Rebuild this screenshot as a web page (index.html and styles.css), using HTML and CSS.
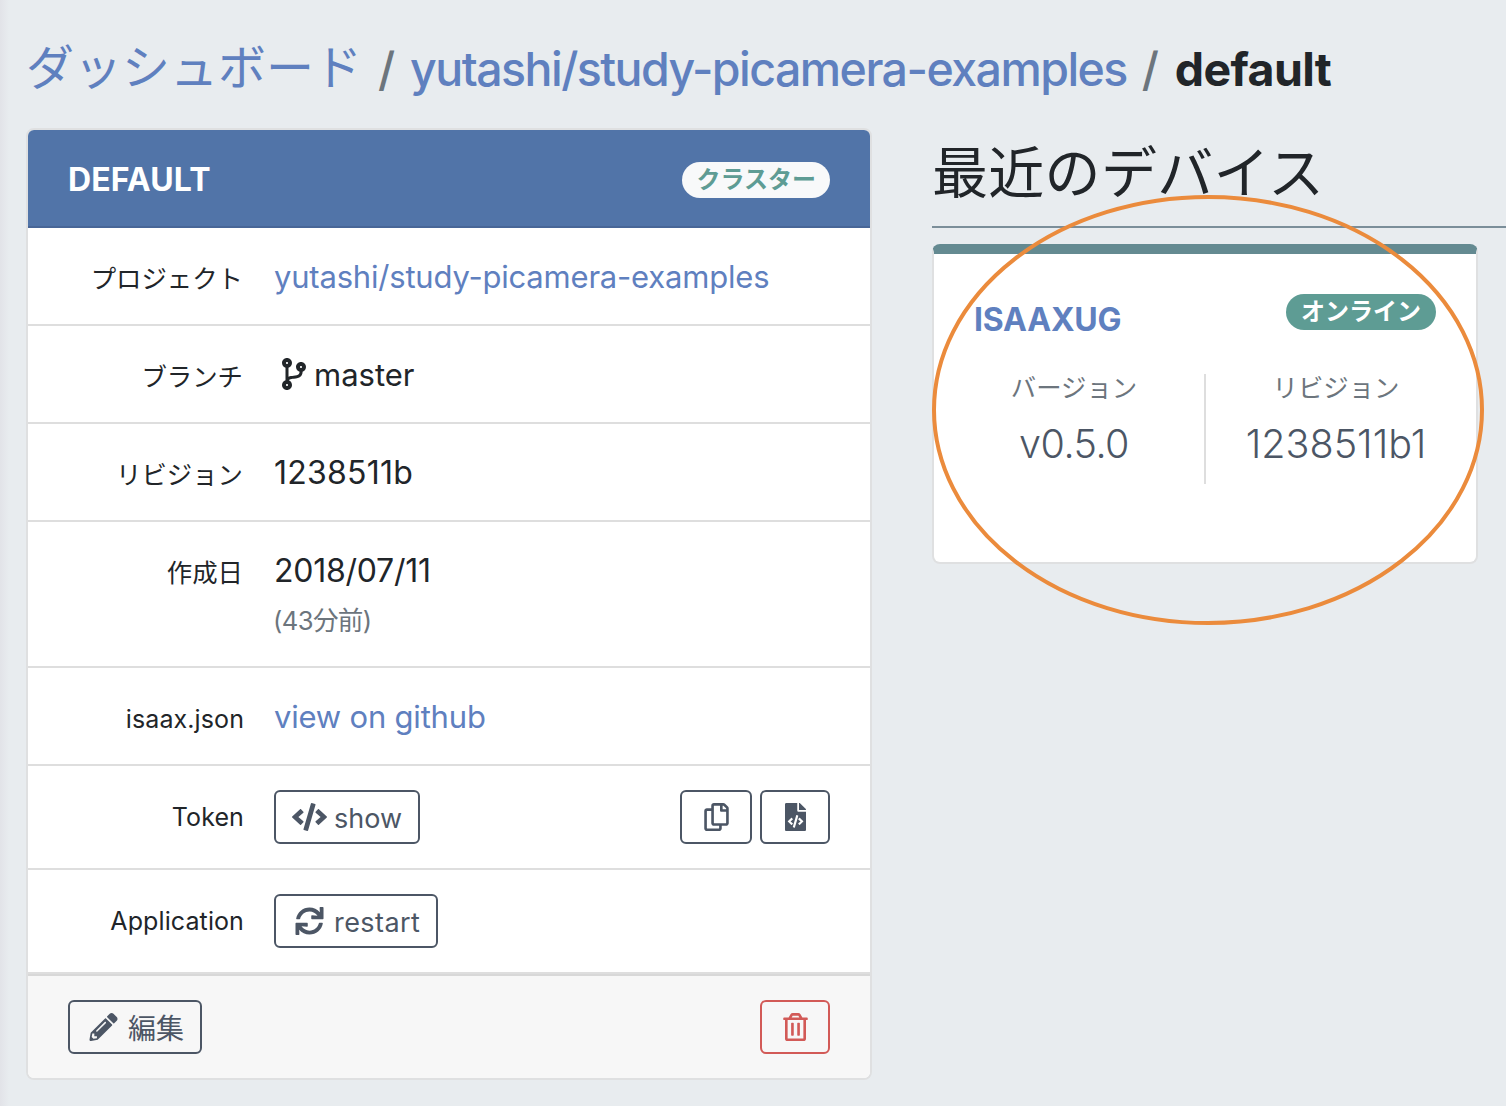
FILE: index.html
```html
<!DOCTYPE html>
<html lang="ja">
<head>
<meta charset="utf-8">
<title>default</title>
<link rel="stylesheet" href="styles.css">
</head>
<body>
<nav class="breadcrumb">
  <a class="crumb-home" href="#">ダッシュボード</a>
  <span class="slash">/</span>
  <a class="crumb-project" href="#">yutashi/study-picamera-examples</a>
  <span class="slash slash-last">/</span>
  <span class="crumb-current">default</span>
</nav>
<main class="columns">
  <section class="card">
    <header class="card-header">
      <h2 class="card-title">DEFAULT</h2>
      <span class="badge badge-light">クラスター</span>
    </header>
    <div class="row">
      <div class="label">プロジェクト</div>
      <div class="value"><a href="#">yutashi/study-picamera-examples</a></div>
    </div>
    <div class="row">
      <div class="label">ブランチ</div>
      <div class="value branch"><svg class="icon-branch" viewBox="0 0 384 512"><path d="M384 144c0-44.2-35.8-80-80-80s-80 35.8-80 80c0 36.4 24.3 67.1 57.5 76.8-.6 16.1-4.2 28.5-11 36.9-15.4 19.2-49.3 22.4-85.2 25.7-28.2 2.6-57.4 5.4-81.3 16.9v-144c32.5-10.2 56-40.5 56-76.3 0-44.2-35.8-80-80-80S0 35.8 0 80c0 35.8 23.5 66.1 56 76.3v199.3C23.5 365.9 0 396.2 0 432c0 44.2 35.8 80 80 80s80-35.8 80-80c0-34-21.2-63.1-51.2-74.6 3.1-5.2 7.8-9.8 14.9-13.4 16.2-8.2 40.4-10.4 66.1-12.8 42.2-3.9 90-8.4 118.2-43.4 14-17.4 21.1-39.8 21.6-67.9 31.6-10.8 54.4-40.7 54.4-75.9zM80 64c8.8 0 16 7.2 16 16s-7.2 16-16 16-16-7.2-16-16 7.2-16 16-16zm0 384c-8.8 0-16-7.2-16-16s7.2-16 16-16 16 7.2 16 16-7.2 16-16 16zm224-320c8.8 0 16 7.2 16 16s-7.2 16-16 16-16-7.2-16-16 7.2-16 16-16z"/></svg>master</div>
    </div>
    <div class="row">
      <div class="label">リビジョン</div>
      <div class="value numeric">1238511b</div>
    </div>
    <div class="row row-tall">
      <div class="label">作成日</div>
      <div class="value numeric date">2018/07/11<div class="ago">(43分前)</div></div>
    </div>
    <div class="row">
      <div class="label label-latin">isaax.json</div>
      <div class="value"><a href="#">view on github</a></div>
    </div>
    <div class="row row-actions">
      <div class="label label-latin">Token</div>
      <div class="value actions">
        <button class="btn"><svg class="icon" viewBox="0 0 640 512"><path d="M278.9 511.5l-61-17.7c-6.4-1.8-10-8.5-8.2-14.9L346.2 8.7c1.8-6.4 8.5-10 14.9-8.2l61 17.7c6.4 1.8 10 8.5 8.2 14.9L293.8 503.3c-1.9 6.4-8.5 10.1-14.9 8.2zm-114-112.2l43.5-46.4c4.6-4.9 4.3-12.7-.8-17.2L117 256l90.6-79.7c5.1-4.5 5.5-12.3.8-17.2l-43.5-46.4c-4.5-4.8-12.1-5.1-17-.5L3.8 247.2c-5.1 4.7-5.1 12.8 0 17.5l144.1 135.1c4.9 4.6 12.5 4.4 17-.5zm327.2.6l144.1-135.1c5.1-4.7 5.1-12.8 0-17.5L492.1 112.1c-4.8-4.5-12.4-4.3-17 .5L431.6 159c-4.6 4.9-4.3 12.7.8 17.2L523 256l-90.6 79.7c-5.1 4.5-5.5 12.3-.8 17.2l43.5 46.4c4.5 4.9 12.1 5.1 17 .6z"/></svg><span class="btn-text">show</span></button>
        <div class="tools">
          <button class="btn btn-copy"><svg class="icon" viewBox="0 0 448 512"><path d="M433.941 65.941l-51.882-51.882A48 48 0 0 0 348.118 0H176c-26.51 0-48 21.49-48 48v48H48c-26.51 0-48 21.49-48 48v320c0 26.51 21.49 48 48 48h224c26.51 0 48-21.49 48-48v-48h80c26.51 0 48-21.49 48-48V99.882a48 48 0 0 0-14.059-33.941zM266 464H54a6 6 0 0 1-6-6V150a6 6 0 0 1 6-6h74v224c0 26.51 21.49 48 48 48h96v42a6 6 0 0 1-6 6zm128-96H182a6 6 0 0 1-6-6V54a6 6 0 0 1 6-6h106v88c0 13.255 10.745 24 24 24h88v202a6 6 0 0 1-6 6zm6-256h-64V48h9.632c1.591 0 3.117.632 4.243 1.757l48.368 48.368a6 6 0 0 1 1.757 4.243V112z"/></svg></button>
          <button class="btn btn-square"><svg class="icon" viewBox="0 0 384 512"><path d="M384 121.941V128H256V0h6.059c6.365 0 12.47 2.529 16.971 7.029l97.941 97.941A24.005 24.005 0 0 1 384 121.941zM248 160c-13.2 0-24-10.8-24-24V0H24C10.745 0 0 10.745 0 24v464c0 13.255 10.745 24 24 24h336c13.255 0 24-10.745 24-24V160H248zM123.206 400.505a5.4 5.4 0 0 1-7.633.246l-64.866-60.812a5.4 5.4 0 0 1 0-7.879l64.866-60.812a5.4 5.4 0 0 1 7.633.246l19.579 20.885a5.4 5.4 0 0 1-.372 7.747L101.65 336l40.763 35.874a5.4 5.4 0 0 1 .372 7.747l-19.579 20.884zm51.295 50.479l-27.453-7.97a5.402 5.402 0 0 1-3.681-6.692l61.44-211.626a5.402 5.402 0 0 1 6.692-3.681l27.452 7.97a5.4 5.4 0 0 1 3.68 6.692l-61.44 211.626a5.397 5.397 0 0 1-6.69 3.681zm160.792-111.045l-64.866 60.812a5.4 5.4 0 0 1-7.633-.246l-19.58-20.885a5.4 5.4 0 0 1 .372-7.747L284.35 336l-40.763-35.874a5.4 5.4 0 0 1-.372-7.747l19.58-20.885a5.4 5.4 0 0 1 7.633-.246l64.866 60.812a5.4 5.4 0 0 1-.001 7.879z"/></svg></button>
        </div>
      </div>
    </div>
    <div class="row row-actions">
      <div class="label label-latin">Application</div>
      <div class="value actions">
        <button class="btn btn-restart"><svg class="icon" viewBox="0 0 512 512"><path d="M440.935 12.574l3.966 82.766C399.416 41.904 331.674 8 256 8 134.813 8 33.933 94.924 12.296 209.824 10.908 217.193 16.604 224 24.103 224h49.084c5.57 0 10.377-3.842 11.676-9.259C103.407 137.408 172.931 80 256 80c60.893 0 114.512 30.856 146.104 77.801l-101.53-4.865c-6.845-.328-12.574 5.133-12.574 11.986v47.411c0 6.627 5.373 12 12 12h200.333c6.627 0 12-5.373 12-12V12c0-6.627-5.373-12-12-12h-47.411c-6.853 0-12.315 5.729-11.987 12.574zM256 432c-60.895 0-114.517-30.858-146.109-77.805l101.868 4.871c6.845.327 12.573-5.134 12.573-11.986v-47.412c0-6.627-5.373-12-12-12H12c-6.627 0-12 5.373-12 12V500c0 6.627 5.373 12 12 12h47.385c6.863 0 12.328-5.745 11.985-12.599l-4.129-82.575C112.725 470.166 180.405 504 256 504c121.187 0 222.067-86.924 243.704-201.824 1.388-7.369-4.308-14.176-11.807-14.176h-49.084c-5.57 0-10.377 3.842-11.676 9.259C408.593 374.592 339.069 432 256 432z"/></svg><span class="btn-text">restart</span></button>
      </div>
    </div>
    <footer class="card-footer">
      <button class="btn btn-edit"><svg class="icon" viewBox="0 0 512 512"><path d="M497.9 142.1l-46.1 46.1c-4.7 4.7-12.3 4.7-17 0l-111-111c-4.7-4.7-4.7-12.3 0-17l46.1-46.1c18.7-18.7 49.1-18.7 67.9 0l60.1 60.1c18.8 18.7 18.8 49.1 0 67.9zM284.2 99.8L21.6 362.4.4 483.9c-2.9 16.4 11.4 30.6 27.8 27.8l121.5-21.3 262.6-262.6c4.7-4.7 4.7-12.3 0-17l-111-111c-4.8-4.7-12.4-4.7-17.1 0zM124.1 339.9c-5.5-5.5-5.5-14.3 0-19.8l154-154c5.5-5.5 14.3-5.5 19.8 0s5.5 14.3 0 19.8l-154 154c-5.5 5.5-14.3 5.5-19.8 0zM88 424h48v36.3l-64.5 11.3-31.1-31.1L51.7 376H88v48z"/></svg><span class="btn-text">編集</span></button>
      <button class="btn btn-square btn-danger"><svg class="icon" viewBox="0 0 448 512"><path d="M268 416h24a12 12 0 0 0 12-12V188a12 12 0 0 0-12-12h-24a12 12 0 0 0-12 12v216a12 12 0 0 0 12 12zM432 80h-82.41l-34-56.7A48 48 0 0 0 274.41 0H173.59a48 48 0 0 0-41.16 23.3L98.41 80H16A16 16 0 0 0 0 96v16a16 16 0 0 0 16 16h16v336a48 48 0 0 0 48 48h288a48 48 0 0 0 48-48V128h16a16 16 0 0 0 16-16V96a16 16 0 0 0-16-16zM171.84 50.91A6 6 0 0 1 177 48h94a6 6 0 0 1 5.15 2.91L293.61 80H154.39zM368 464H80V128h288zm-212-48h24a12 12 0 0 0 12-12V188a12 12 0 0 0-12-12h-24a12 12 0 0 0-12 12v216a12 12 0 0 0 12 12z"/></svg></button>
    </footer>
  </section>
  <section class="devices">
    <h1 class="devices-title">最近のデバイス</h1>
    <article class="device">
      <header class="device-header">
        <a class="device-name" href="#">ISAAXUG</a>
        <span class="badge badge-online">オンライン</span>
      </header>
      <div class="stats">
        <div class="stat">
          <div class="stat-label">バージョン</div>
          <div class="stat-value">v0.5.0</div>
        </div>
        <div class="stat">
          <div class="stat-label">リビジョン</div>
          <div class="stat-value stat-revision">1238511b1</div>
        </div>
      </div>
      <svg class="highlight" viewBox="0 0 552 430"><ellipse cx="276" cy="215" rx="274" ry="213"/></svg>
    </article>
  </section>
</main>
</body>
</html>
```
FILE: styles.css
```css
* { box-sizing: border-box; }
body {
  margin: 0;
  height: 1106px;
  overflow: hidden;
  background: linear-gradient(90deg, #e2e3e8 0, #e8ecef 9px);
  color: #212529;
  font-family: Inter, "Noto Sans CJK JP", sans-serif;
  font-size: 31px;
  line-height: 48px;
}
a { text-decoration: none; color: #5f80bf; }
h1, h2 { margin: 0; }

.breadcrumb {
  display: flex;
  align-items: baseline;
  height: 128px;
  padding: 34px 0 0 26px;
  font-size: 46.5px;
  line-height: 70px;
  font-weight: 500;
  white-space: nowrap;
}
.crumb-home { width: 336px; font-size: 48px; font-weight: 400; transform: translateY(-1px); }
.crumb-project { letter-spacing: -1.54px; }
.crumb-current { font-weight: 700; letter-spacing: -0.64px; }
.slash { width: 16px; color: #6c757d; margin: 0 16px; }
.slash-last { margin: 0 17px 0 15px; }

.columns { display: flex; gap: 60px; padding-left: 26px; align-items: flex-start; }
.card {
  width: 846px;
  flex: none;
  border: 2px solid #dfe0e1;
  border-radius: 8px;
  background: #fff;
  overflow: hidden;
}
.card-header {
  display: flex;
  justify-content: space-between;
  align-items: center;
  height: 98px;
  padding: 4px 40px 0;
  background: #5174a8;
  border-bottom: 2px solid #486697;
}
.card-title { font-size: 32px; font-weight: 700; letter-spacing: 0.15px; color: #fff; }
.badge {
  height: 36px;
  padding: 0 15px;
  border-radius: 18px;
  font-size: 24px;
  line-height: 36px;
  font-weight: 700;
}
.badge-light { padding: 0 14px; background: #f8f9fa; color: #5e9c94; }
.badge-online { background: #5e9c94; color: #fff; }

.row {
  display: flex;
  align-items: flex-start;
  height: 98px;
  padding: 25px 40px 0 0;
  border-bottom: 2px solid #dedede;
}
.row-tall { height: 146px; }
.label { width: 216px; padding: 2px 1px 0 0; text-align: right; font-size: 25.4px; }
.label-latin { padding-right: 0; font-size: 25px; letter-spacing: 0.1px; }
.value { flex: 1; padding-left: 30px; letter-spacing: -0.2px; }
.numeric { font-size: 32px; letter-spacing: 0.25px; }
.date { letter-spacing: -0.25px; }
.branch { display: flex; align-items: center; letter-spacing: 0; }
.icon-branch { width: 24px; height: 32px; margin: 0 8px 2px; fill: #212529; }
.ago { margin-left: -1px; font-size: 25.6px; line-height: 52px; letter-spacing: -0.6px; color: #6c757d; }
.row-actions { height: 104px; padding-top: 0; align-items: center; }
.row-actions .label { padding-top: 0; }
.actions { display: flex; justify-content: space-between; letter-spacing: 0; }
.tools { display: flex; gap: 8px; }

.btn {
  display: flex;
  align-items: center;
  justify-content: center;
  gap: 7px;
  height: 54px;
  padding: 0 16px;
  border: 2px solid #4c5665;
  border-radius: 6px;
  background: transparent;
  color: #4c5665;
  font: 400 27px/42px Inter, "Noto Sans CJK JP", sans-serif;
}
.btn-text { padding-top: 3px; }
.btn-restart { letter-spacing: 0.43px; }
.btn-edit { font-size: 28px; }
.btn-copy { width: 72px; }
.btn-square { width: 70px; }
.btn-danger { color: #d25a57; border-color: #d25a57; }
.icon { width: 35px; height: 28px; fill: currentColor; flex: none; }
.card-footer {
  display: flex;
  justify-content: space-between;
  padding: 24px 40px;
  border-top: 2px solid #d8d8d8;
  background: #f7f7f7;
}

.devices { flex: 1; }
.devices-title {
  height: 100px;
  padding-top: 5px;
  border-bottom: 2px solid #7b8e99;
  font-size: 56px;
  line-height: 80px;
  font-weight: 400;
  letter-spacing: 0.3px;
}
.device {
  position: relative;
  width: 546px;
  height: 320px;
  margin-top: 16px;
  border: 2px solid #dfe0e1;
  border-top: 10px solid #648a91;
  border-radius: 8px;
  background: #fff;
}
.device-header { display: flex; justify-content: space-between; height: 120px; padding: 40px 40px 0; }
.device-name { font-size: 32px; line-height: 51px; font-weight: 700; letter-spacing: -0.2px; }
.stats { display: flex; padding: 0 10px; }
.stat { flex: 1; height: 110px; text-align: center; }
.stat + .stat { border-left: 2px solid #dedede; }
.stat-label { font-size: 25.4px; line-height: 28px; color: #6c757d; }
.stat-value { margin-top: 18px; font-size: 39.5px; font-weight: 300; letter-spacing: -0.5px; color: #4c5665; }
.stat-revision { letter-spacing: 0; }
.highlight {
  position: absolute;
  left: -2px;
  top: -59px;
  width: 552px;
  height: 430px;
  fill: none;
  stroke: #eb8b3c;
  stroke-width: 4px;
}
```
